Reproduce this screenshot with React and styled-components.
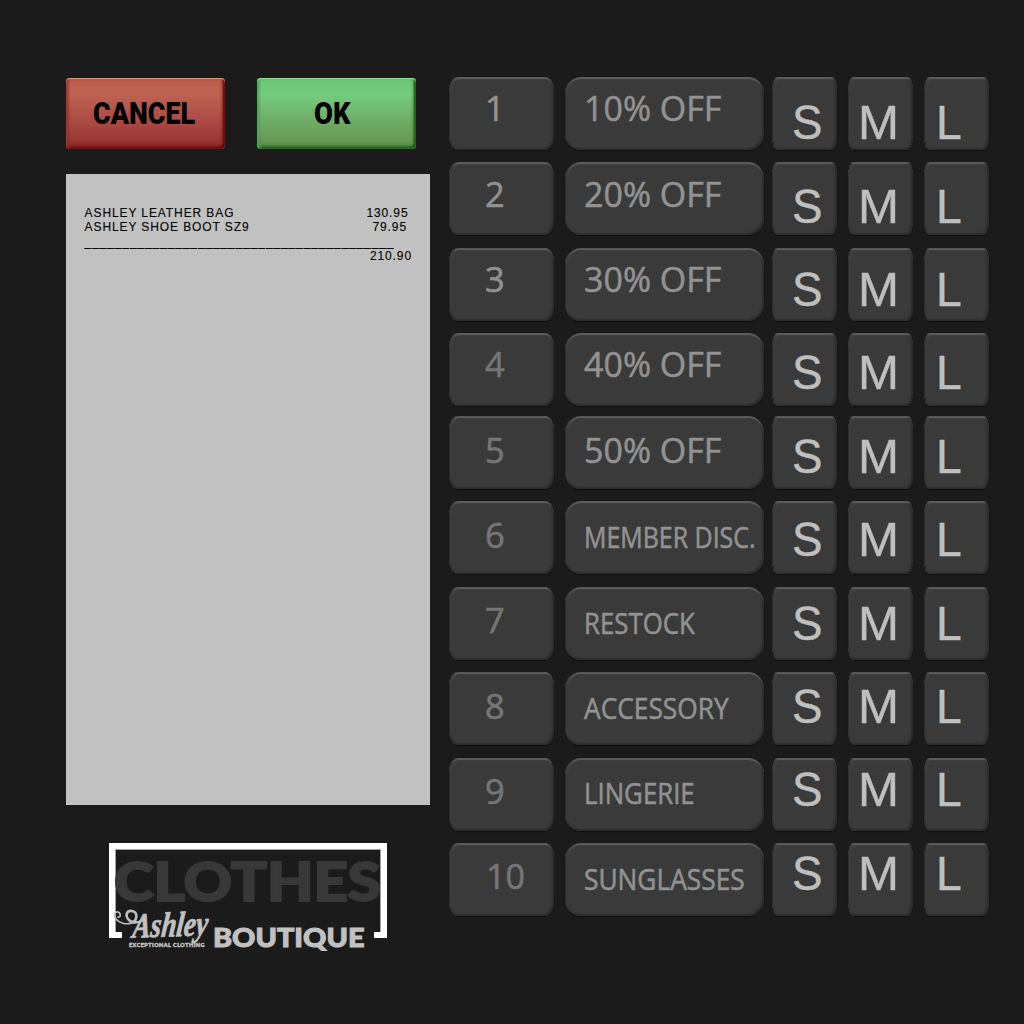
import React, { useLayoutEffect, useRef, useState } from "react";
import styled, { createGlobalStyle } from "styled-components";

const Global = createGlobalStyle`
  * { box-sizing: border-box; }
  body { margin: 0; background: #1b1b1b; overflow: hidden; }
`;

const Screen = styled.main`
  width: 1024px;
  height: 1024px;
  display: grid;
  grid-template-columns: 364px 540px;
  column-gap: 19px;
  padding: 77px 0 0 66px;
  background: #1b1b1b;
  font-family: "Liberation Sans", Arial, sans-serif;
`;

const FitSpan = styled.span`
  display: inline-block;
  white-space: pre;
  transform-origin: 0 50%;
`;

function Fit({ width, children }) {
  const ref = useRef(null);
  const [scale, setScale] = useState(1);
  useLayoutEffect(() => {
    const measure = () => {
      if (ref.current) setScale(width / ref.current.offsetWidth);
    };
    measure();
    document.fonts?.ready.then(measure);
  }, [width]);
  return (
    <FitSpan ref={ref} style={{ transform: `scaleX(${scale})` }}>
      {children}
    </FitSpan>
  );
}

const Left = styled.section`
  display: flex;
  flex-direction: column;
`;

const Actions = styled.div`
  display: flex;
  gap: 32px;
  padding-top: 1px;
  height: 97px;
`;

const ActionButton = styled.button`
  width: 159px;
  height: 71px;
  padding: 0 0 0 ${(p) => p.$inset}px;
  border: 0;
  border-radius: 4px;
  text-align: left;
  color: #000;
  font: 900 32px/69px Roboto, sans-serif;
  background: ${(p) => p.$fill};
  box-shadow: ${(p) => p.$bevel};
`;

const Receipt = styled.div`
  height: 631px;
  background: #c1c1c1;
  padding: 31.5px 18px 0 18.6px;
  color: #000;
  font-size: 12px;
  line-height: 14.5px;
  -webkit-text-stroke: 0.1px #000;
`;

const Line = styled.div`
  display: flex;
  justify-content: space-between;
  height: 14.5px;
  padding-right: ${(p) => p.$right || 0}px;
  letter-spacing: 0.9px;
  white-space: nowrap;
`;

const Rule = styled(Line)`
  letter-spacing: 0.88px;
`;

const Total = styled(Line)`
  justify-content: flex-end;
`;

const Logo = styled.div`
  position: relative;
  width: 278px;
  height: 108px;
  margin: 38px 0 0 43px;
`;

const Frame = styled.div`
  width: 278px;
  height: 95px;
  border: 6px solid #fff;
  border-width: 6px 6px 0;
  box-shadow: inset 1px 1px 0 #9fa3a2, inset -1px 0 0 #9fa3a2;
  display: flex;
  justify-content: space-between;
  align-items: flex-end;
`;

const Foot = styled.i`
  width: 7px;
  height: 6.5px;
  background: #fff;
`;

const Word = styled.div`
  position: absolute;
  left: ${(p) => p.$x}px;
  top: ${(p) => p.$y}px;
  color: ${(p) => p.$color};
  font: 900 ${(p) => p.$size}px/1 Lato, sans-serif;
  letter-spacing: ${(p) => p.$track || 0}px;
  -webkit-text-stroke: ${(p) => p.$stroke || 0}px ${(p) => p.$color};
`;

const Script = styled.div`
  position: absolute;
  left: 24px;
  top: 64px;
  color: #c1c1c1;
  font: italic 700 35px/1 "Liberation Serif", serif;
  -webkit-text-stroke: 0.8px #c1c1c1;
  transform: rotate(-2deg) skewX(-8deg);
`;

const Swirl = styled.svg`
  position: absolute;
  left: 3px;
  top: 64px;
`;

const Pad = styled.section`
  display: flex;
  flex-direction: column;
`;

const Row = styled.div`
  display: grid;
  flex: none;
  height: ${(p) => p.$pitch}px;
  grid-template-columns: 105px 196px 65px 65px 65px;
  column-gap: 11px;
`;

const Key = styled.button`
  height: 72.5px;
  border: 0;
  text-align: left;
  background: #3a3a3a;
  padding: ${(p) => p.$top}px 0 0 ${(p) => p.$inset}px;
  display: flex;
  align-items: flex-start;
  overflow: hidden;
  border-radius: ${(p) => p.$radius};
  box-shadow: inset 1px 0 1px #2d2d2d, inset -1.5px -1.5px 2px #292929,
    inset 0 2px 1px #606060, inset 3px 3px 2px -1px #424242, 0 1px 1px #111;
`;

const NumberKey = styled(Key)`
  color: ${(p) => (p.$lit ? "#919191" : "#767676")};
  font: 400 35px/35px "Open Sans", "Noto Sans", sans-serif;
  -webkit-text-stroke: 0.6px currentColor;
`;

const LabelKey = styled(Key)`
  width: 199px;
  color: #929292;
  font: 400 ${(p) => p.$size}px/35px "Open Sans", "Noto Sans", sans-serif;
  -webkit-text-stroke: 0.55px currentColor;
`;

const SizeKey = styled(Key)`
  color: #bfbfbf;
  font: 400 48px/48px "Liberation Sans", Arial, sans-serif;
  -webkit-text-stroke: 0.4px currentColor;
`;

const rows = [
  { label: "10% OFF", top: 77, width: 137 },
  { label: "20% OFF", top: 162, width: 137 },
  { label: "30% OFF", top: 248, width: 137 },
  { label: "40% OFF", top: 333, width: 137 },
  { label: "50% OFF", top: 416, width: 137 },
  { label: "MEMBER DISC.", top: 501, width: 171.5 },
  { label: "RESTOCK", top: 587, width: 110.5 },
  { label: "ACCESSORY", top: 672, width: 145 },
  { label: "LINGERIE", top: 758, width: 110.5 },
  { label: "SUNGLASSES", top: 843, width: 160.5 },
];

const sizes = [
  ["S", 19.5, 30.5],
  ["M", 9.5, 41],
  ["L", 11.5, 26],
];

export default function App() {
  return (
    <>
      <Global />
      <Screen>
        <Left>
          <Actions>
            <ActionButton
              $inset={26.5}
              $fill="linear-gradient(#b95a49 0%, #bf6453 20%, #ad4c45 58%, #91302f 100%)"
              $bevel="inset 0 1px 1px #d3a297, inset 2px 0 3px #a02c20, inset -2px -2px 2px #6b0000, inset -1px -3px 5px #7d1514"
            >
              <Fit width={102.5}>CANCEL</Fit>
            </ActionButton>
            <ActionButton
              $inset={57}
              $fill="linear-gradient(#6bc575 0%, #73cd7e 22%, #6ea964 65%, #639350 100%)"
              $bevel="inset 0 1px 1px #9be6a5, inset 2px 0 3px #4ea557, inset -2px -2px 2px #145204, inset -1px -3px 5px #34702a"
            >
              <Fit width={37}>OK</Fit>
            </ActionButton>
          </Actions>
          <Receipt>
            <Line $right={3.5}>
              <span>ASHLEY LEATHER BAG</span>
              <span>130.95</span>
            </Line>
            <Line $right={5}>
              <span>ASHLEY SHOE BOOT SZ9</span>
              <span>79.95</span>
            </Line>
            <Rule>
              <span>{"_".repeat(41)}</span>
            </Rule>
            <Total $right={-1}>
              <span>210.90</span>
            </Total>
          </Receipt>
          <Logo>
            <Frame>
              <Foot />
              <Foot />
            </Frame>
            <Word $x={5} $y={11} $size={53} $stroke={2} $color="#383838">
              <Fit width={267}>CLOTHES</Fit>
            </Word>
            <Word $x={103.5} $y={79.5} $size={27} $stroke={1} $color="#c1c1c1">
              <Fit width={151.5}>BOUTIQUE</Fit>
            </Word>
            <Swirl width="34" height="30" viewBox="0 0 34 30" fill="none" stroke="#bdbdbd" strokeLinecap="round">
              <path strokeWidth="1.6" d="M6 10C9 11 9 6 6 5C2 4 2 9 4 12C7 16 14 18 19 16" />
              <path strokeWidth="2.6" d="M19 16C26 14 26 5 20 4C15 3 13 8 16 12C19 16 25 17 31 13" />
            </Swirl>
            <Script>
              <Fit width={75}>Ashley</Fit>
            </Script>
            <Word $x={20} $y={99.5} $size={5.4} $stroke={0.45} $color="#c1c1c1" $track={0.5}>
              <Fit width={75.5}>EXCEPTIONAL CLOTHING</Fit>
            </Word>
          </Logo>
        </Left>
        <Pad>
          {rows.map((row, i) => {
            const textTop = 121.3 + i * 85.35 - row.top - 31.1;
            const sizeTop = 140 + i * 83.35 - row.top - 40.6;
            const next = rows[i + 1];
            return (
              <Row key={row.label} $pitch={next ? next.top - row.top : 73}>
                <NumberKey $lit={i < 3} $top={textTop} $inset={i === 9 ? 37 : 36.3} $radius="9px / 14px">
                  <Fit width={i === 9 ? 39 : 19.7}>{i + 1}</Fit>
                </NumberKey>
                <LabelKey
                  $top={i < 5 ? textTop : textTop + 3.2}
                  $size={i < 5 ? 35 : 28.5}
                  $inset={i === 7 ? 19.3 : i < 5 ? 18.5 : 18.9}
                  $radius="16px"
                >
                  <Fit width={row.width}>{row.label}</Fit>
                </LabelKey>
                {sizes.map(([size, inset, width]) => (
                  <SizeKey key={size} $top={sizeTop} $inset={inset} $radius="5px / 15px">
                    <Fit width={width}>{size}</Fit>
                  </SizeKey>
                ))}
              </Row>
            );
          })}
        </Pad>
      </Screen>
    </>
  );
}
